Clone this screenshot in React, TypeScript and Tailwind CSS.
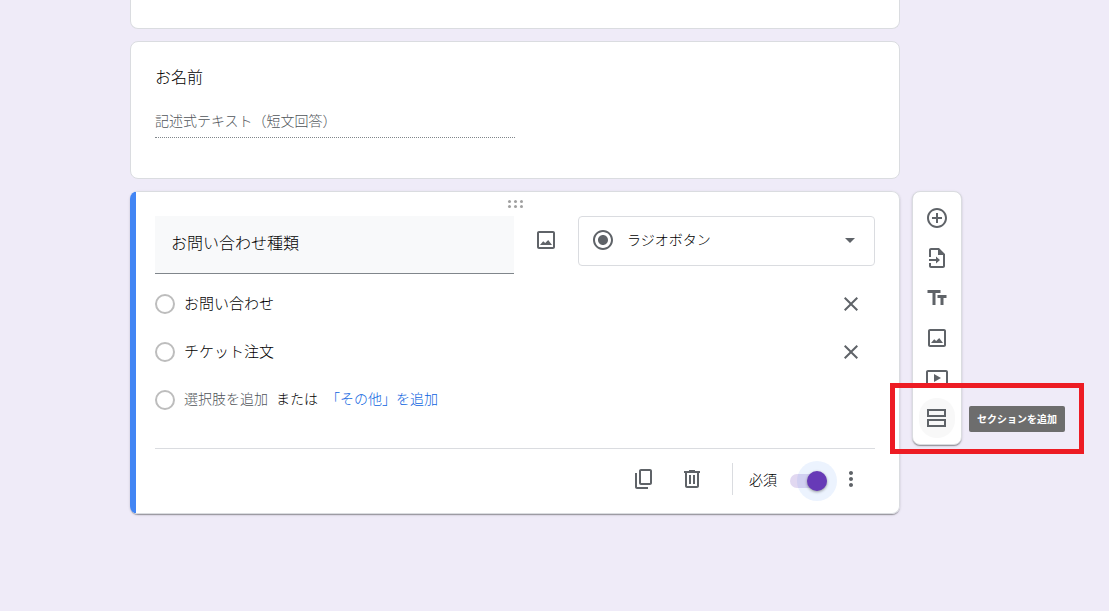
import { ReactNode, useState } from "react";
import {
    MdAddCircleOutline,
    MdArrowDropDown,
    MdClose,
    MdMoreVert,
    MdRadioButtonChecked,
    MdTextFields,
} from "react-icons/md";

const ImageIcon = () => (
    <svg viewBox="0 0 24 24" className="size-6" fill="currentColor" aria-hidden="true">
        <path d="M19 5v14H5V5h14m0-2H5c-1.1 0-2 .9-2 2v14c0 1.1.9 2 2 2h14c1.1 0 2-.9 2-2V5c0-1.1-.9-2-2-2z" />
        <path d="M6 17l3.2-3.8 2 1.9L14.2 12 18 17z" />
    </svg>
);

const ImportIcon = () => (
    <svg viewBox="0 0 24 24" className="size-6" fill="currentColor" aria-hidden="true">
        <path d="M14 2H6c-1.1 0-2 .9-2 2v7h2V4h7v5h5v11H6v-3H4v3c0 1.1.9 2 2 2h12c1.1 0 2-.9 2-2V8l-6-6z" />
        <path d="M4 13h7v-2.5l4 3.5-4 3.5V15H4z" />
    </svg>
);

const VideoIcon = () => (
    <svg viewBox="0 0 24 24" className="size-6" fill="currentColor" aria-hidden="true">
        <path d="M9 8v8l7-4-7-4zm12-4H3c-1.1 0-2 .9-2 2v12c0 1.1.9 2 2 2h18c1.1 0 2-.9 2-2V6c0-1.1-.9-2-2-2zm0 14H3V6h18v12z" />
    </svg>
);

const SectionIcon = () => (
    <svg viewBox="0 0 24 24" className="size-6" fill="none" stroke="currentColor" strokeWidth="2" aria-hidden="true">
        <path d="M3 4h17v6H3zM3 14h17v6H3z" />
    </svg>
);

const CopyIcon = () => (
    <svg viewBox="0 0 24 24" className="size-6" fill="currentColor" aria-hidden="true">
        <path d="M18 2H9c-1.1 0-2 .9-2 2v12c0 1.1.9 2 2 2h9c1.1 0 2-.9 2-2V4c0-1.1-.9-2-2-2zm0 14H9V4h9v12zM3 6v14c0 1.1.9 2 2 2h11v-2H5V6H3z" />
    </svg>
);

const TrashIcon = () => (
    <svg viewBox="0 0 24 24" className="size-6" fill="currentColor" aria-hidden="true">
        <path d="M15 4V3H9v1H4v2h1v13c0 1.1.9 2 2 2h10c1.1 0 2-.9 2-2V6h1V4h-5zm2 15H7V6h10v13zM9 8h2v9H9zM13 8h2v9h-2z" />
    </svg>
);

const DragDots = () => (
    <svg viewBox="0 0 16 8" className="h-2 w-4" fill="#a0a0a0" aria-hidden="true">
        {[2.5, 8.5, 14.5].map(x => [1.5, 6.5].map(y => <circle key={`${x}-${y}`} cx={x} cy={y} r="1.5" />))}
    </svg>
);

interface IconButtonProps {
    label: string;
    children: ReactNode;
}

const IconButton = ({ label, children }: IconButtonProps) => (
    <button type="button" aria-label={label} className="flex size-12 shrink-0 items-center justify-center text-[#5f6368]">
        {children}
    </button>
);

const ToolButton = ({ label, children }: IconButtonProps) => (
    <button type="button" aria-label={label} className="flex h-10 w-full items-center justify-center">
        {children}
    </button>
);

const RadioMark = ({ label }: { label: string }) => (
    <input
        type="radio"
        disabled
        aria-label={label}
        className="size-5 shrink-0 appearance-none rounded-full border-2 border-[#bdbdbd]"
    />
);

const Option = ({ text }: { text: string }) => (
    <div className="flex h-12 items-center">
        <RadioMark label={text} />
        <input
            type="text"
            aria-label="選択肢"
            defaultValue={text}
            className="ml-[9px] min-w-0 flex-1 pb-0.5 text-[15px] text-black outline-none"
        />
        <IconButton label="選択肢を削除">
            <MdClose className="size-6" />
        </IconButton>
    </div>
);

const NameCard = () => (
    <section className="rounded-lg border border-[#dadce0] bg-white px-6 pt-[22px] pb-10">
        <h2 className="text-base text-black">お名前</h2>
        <p className="mt-[18px] w-1/2 border-b border-dotted border-[#80868b] pb-[3px] text-sm leading-7 text-[#50555a]">
            記述式テキスト（短文回答）
        </p>
    </section>
);

const QuestionCard = () => {
    const [required, setRequired] = useState(true);

    return (
        <section className="overflow-hidden rounded-lg shadow-[0_2px_1px_-1px_rgba(0,0,0,0.2),0_1px_1px_0_rgba(0,0,0,0.14),0_1px_3px_0_rgba(0,0,0,0.12)]">
            <div className="rounded-r-lg border border-l-[6px] border-[#dadce0] border-l-[#4285f4] bg-white pr-6 pl-[19px]">
                <div className="flex h-6 items-center justify-center">
                    <DragDots />
                </div>

                <div className="flex items-start">
                    <input
                        type="text"
                        aria-label="質問"
                        defaultValue="お問い合わせ種類"
                        className="h-[58px] min-w-0 flex-1 border-b border-[#80868b] bg-[#f8f9fa] px-4 pb-1.5 text-base text-black outline-none"
                    />
                    <div className="mx-2">
                        <IconButton label="画像を追加">
                            <ImageIcon />
                        </IconButton>
                    </div>
                    <div className="flex h-[50px] w-[297px] items-center rounded border border-[#dadce0] px-3 pb-0.5 text-[#5f6368]">
                        <MdRadioButtonChecked className="size-6" />
                        <select
                            aria-label="質問の種類"
                            className="ml-3 flex-1 appearance-none pb-0.5 text-sm text-black outline-none"
                        >
                            <option>ラジオボタン</option>
                        </select>
                        <MdArrowDropDown className="size-6" />
                    </div>
                </div>

                <div className="mt-1.5">
                    <Option text="お問い合わせ" />
                    <Option text="チケット注文" />
                    <div className="flex h-12 items-center text-sm text-black">
                        <RadioMark label="新しい選択肢" />
                        <button type="button" className="ml-[9px] pb-1 text-[#50555a]">選択肢を追加</button>
                        <span className="mx-2 pb-1">または</span>
                        <button type="button" className="pb-1 text-[#0b63e0]">「その他」を追加</button>
                    </div>
                </div>

                <div className="mt-6 flex h-[65px] items-center justify-end border-t border-[#dadce0] pb-1">
                    <IconButton label="コピーを作成">
                        <CopyIcon />
                    </IconButton>
                    <IconButton label="削除">
                        <TrashIcon />
                    </IconButton>
                    <div className="mx-4 h-8 w-px bg-[#dadce0]" />
                    <label className="flex items-center gap-[13px] pt-1 text-sm text-black">
                        <span className="pb-1">必須</span>
                        <span className="flex h-3.5 w-[37px] items-center rounded-full bg-[#e1d8f1]">
                            <input
                                type="checkbox"
                                role="switch"
                                checked={required}
                                onChange={() => setRequired(!required)}
                                className="size-5 appearance-none rounded-full bg-[#9aa0a6] shadow-[0_1px_3px_rgba(0,0,0,0.4),0_0_0_10px_rgba(66,133,244,0.1)] checked:ml-auto checked:bg-[#673ab7]"
                            />
                        </span>
                    </label>
                    <IconButton label="その他のオプション">
                        <MdMoreVert className="size-6" />
                    </IconButton>
                </div>
            </div>
        </section>
    );
};

const Toolbar = () => (
    <div className="mt-[191px] w-[50px] shrink-0 self-start rounded-lg border border-[#dadce0] bg-white py-1.5 text-[#5f6368] shadow-[0_2px_1px_-1px_rgba(0,0,0,0.2),0_1px_1px_0_rgba(0,0,0,0.14),0_1px_3px_0_rgba(0,0,0,0.12)]">
        <ToolButton label="質問を追加"><MdAddCircleOutline className="size-6" /></ToolButton>
        <ToolButton label="質問をインポート"><ImportIcon /></ToolButton>
        <ToolButton label="タイトルと説明を追加"><MdTextFields className="size-6" /></ToolButton>
        <ToolButton label="画像を追加"><ImageIcon /></ToolButton>
        <ToolButton label="動画を追加"><VideoIcon /></ToolButton>
        <div className="relative">
            <button type="button" aria-label="セクションを追加" className="mx-auto flex h-10 w-9 items-center justify-center rounded-full bg-[#f8f8f8]">
                <SectionIcon />
            </button>
            {/* highlight frame with the tooltip inside */}
            <div className="pointer-events-none absolute -top-[15px] -left-[23px] flex h-[71px] w-[194px] items-center justify-end border-5 border-[#ed1c24] pr-3.5">
                <span role="tooltip" className="rounded-xs bg-[#6d6d6d] px-2 text-[10px] leading-[26px] font-bold whitespace-nowrap text-white">
                    セクションを追加
                </span>
            </div>
        </div>
    </div>
);

export default function App() {
    return (
        <div className="flex min-h-screen justify-center gap-3 bg-[#efebf8] pr-[17px] pb-24 font-['Noto_Sans_CJK_JP',sans-serif] font-light">
            <main className="flex w-full max-w-[770px] min-w-0 flex-col gap-3">
                <section className="h-[29px] rounded-b-lg border border-t-0 border-[#dadce0] bg-white" />
                <NameCard />
                <QuestionCard />
            </main>
            <Toolbar />
        </div>
    );
}
